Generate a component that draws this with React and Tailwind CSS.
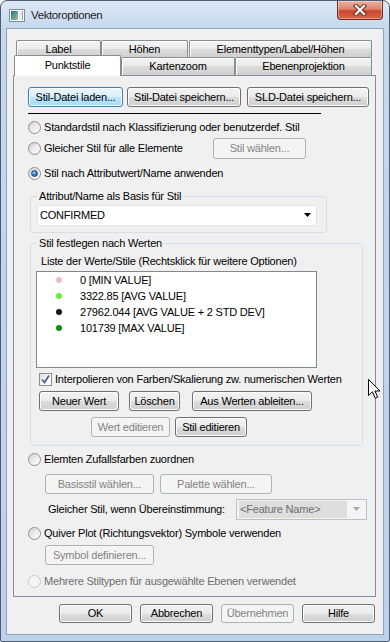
import React from 'react';

const btnStyles = {
  normal:
    'border-[#707070] bg-[linear-gradient(to_bottom,#f2f2f2_0%,#ebebeb_50%,#dddddd_50%,#cfcfcf_100%)] shadow-[inset_0_0_0_1px_#fcfcfc] text-black',
  focus:
    'border-[#3c7fb1] bg-[linear-gradient(to_bottom,#eaf6fd_0%,#d9f0fc_50%,#bee6fd_50%,#a7d9f5_100%)] shadow-[inset_0_0_0_1px_#fcfcfc] text-black',
  disabled: 'border-[#adb2b5] bg-[#f4f4f4] text-[#838383]',
};

const Btn = ({ className = '', variant = 'normal', children }) => (
  <div
    className={`flex shrink-0 items-center justify-center rounded-[3px] border ${btnStyles[variant]} ${className}`}
  >
    {children}
  </div>
);

const Radio = ({ checked, disabled }) => (
  <span
    className={`flex h-[13px] w-[13px] shrink-0 items-center justify-center rounded-full border ${
      disabled
        ? 'border-[#c8c8c8] bg-[#f4f4f4]'
        : 'border-[#8e8f8f] bg-[linear-gradient(135deg,#cfcfcf_0%,#ececec_50%,#ffffff_100%)]'
    }`}
  >
    {checked && (
      <span className="h-[7px] w-[7px] rounded-full border border-[#1b4a78] bg-[radial-gradient(circle_at_40%_35%,#a9d6f4_0%,#3a86c6_45%,#0e3c6a_100%)]" />
    )}
  </span>
);

const RadioRow = ({ checked, disabled, className = '', children }) => (
  <div className={`flex h-[16px] items-center gap-[3px] ml-[14px] ${className}`}>
    <Radio checked={checked} disabled={disabled} />
    <span className={disabled ? 'text-[#6d6d6d]' : 'text-black'}>{children}</span>
  </div>
);

const values = [
  { dot: 'bg-[#f5b8c2]', label: '0 [MIN VALUE]' },
  { dot: 'bg-[#66ee33]', label: '3322.85 [AVG VALUE]' },
  { dot: 'bg-[#161616]', label: '27962.044 [AVG VALUE + 2 STD DEV]' },
  { dot: 'bg-[#138a13]', label: '101739 [MAX VALUE]' },
];

const tabBase =
  'flex items-center justify-center border border-b-0 border-[#898c95] bg-[linear-gradient(to_bottom,#f3f3f3_0%,#ebebeb_50%,#dddddd_50%,#cfcfcf_100%)] shadow-[inset_1px_1px_0_#ffffff] rounded-t-[2px]';

export default function App() {
  return (
    <div className="relative flex h-[642px] w-[390px] flex-col overflow-hidden rounded-t-[7px] rounded-b-[2px] border border-[#4d5d70] bg-[linear-gradient(to_bottom,#dce8f6_0px,#c6d8ee_28px,#bcd1ea_100%)] font-['Liberation_Sans',Arial,sans-serif] text-[11px] leading-[13px] tracking-[-0.2px] text-black">
      {/* Title bar */}
      <div className="flex h-[27px] items-center pt-[2px]">
        <svg className="ml-[8px] shrink-0" width="16" height="13" viewBox="0 0 16 13">
          <defs>
            <linearGradient id="ico" x1="0" y1="0" x2="1" y2="1">
              <stop offset="0" stopColor="#2c6a6e" />
              <stop offset="0.5" stopColor="#5f9c8e" />
              <stop offset="1" stopColor="#9cc4a8" />
            </linearGradient>
          </defs>
          <rect x="0.5" y="0.5" width="15" height="12" fill="#ffffff" stroke="#7d8a99" />
          <rect x="2" y="2" width="7" height="9" fill="url(#ico)" />
          <rect x="10" y="2" width="3" height="9" fill="#e8ecf0" />
          <rect x="13" y="2" width="1" height="9" fill="#8ea0b4" />
        </svg>
        <span className="ml-[6px] text-[11.5px] tracking-[-0.4px] text-[#1e1e1e]">Vektoroptionen</span>
        <div className="ml-auto mr-[6px] flex h-[19px] w-[46px] items-center justify-center self-start -mt-[2px] rounded-b-[4px] border border-t-0 border-[#6e2c1e] bg-[linear-gradient(to_bottom,#eab2a2_0%,#dc8469_45%,#c9472a_55%,#d9664a_100%)] shadow-[inset_0_0_0_1px_rgba(255,255,255,0.35)]">
          <svg width="14" height="12" viewBox="0 0 14 12">
            <path d="M3 2 L11 10 M11 2 L3 10" stroke="#5a1d12" strokeWidth="4.2" strokeLinecap="square" />
            <path d="M3 2 L11 10 M11 2 L3 10" stroke="#ffffff" strokeWidth="2.4" strokeLinecap="square" />
          </svg>
        </div>
      </div>

      {/* Client area */}
      <div className="mx-[5px] flex h-[607px] flex-col border border-[#8ea2bc] bg-[#f0f0f0]">
        {/* Tabs */}
        <div className="mt-[11px] ml-[9px] flex h-[17px]">
          <div className={`${tabBase} h-[17px] w-[85px]`}>Label</div>
          <div className={`${tabBase} h-[17px] w-[87px]`}>Höhen</div>
          <div className={`${tabBase} ml-[1px] h-[17px] w-[183px]`}>Elementtypen/Label/Höhen</div>
        </div>
        <div className="ml-[7px] flex h-[18px] items-end">
          <div className="relative z-10 -mb-[1px] flex h-[21px] w-[107px] items-start justify-center rounded-t-[2px] border border-b-0 border-[#898c95] bg-white pt-[3px]">
            Punktstile
          </div>
          <div className={`${tabBase} h-[18px] w-[114px]`}>Kartenzoom</div>
          <div className={`${tabBase} h-[18px] w-[137px]`}>Ebenenprojektion</div>
        </div>

        {/* Tab panel */}
        <div className="ml-[6px] flex h-[522px] w-[363px] flex-col border border-[#898c95] bg-[#f0f0f0]">
          <div className="ml-[14px] mt-[11px] flex h-[20px]">
            <Btn variant="focus" className="h-[20px] w-[95px]">Stil-Datei laden...</Btn>
            <Btn className="ml-[4px] h-[20px] w-[114px]">Stil-Datei speichern...</Btn>
            <Btn className="ml-[6px] h-[20px] w-[122px]">SLD-Datei speichern...</Btn>
          </div>
          <div className="ml-[14px] mt-[6px] h-px w-[293px] bg-black" />

          <RadioRow className="mt-[5px]">Standardstil nach Klassifizierung oder benutzerdef. Stil</RadioRow>

          <div className="mt-[3px] flex h-[21px] items-center">
            <div className="flex w-[199px] items-center gap-[3px] pl-[14px]">
              <Radio />
              <span>Gleicher Stil für alle Elemente</span>
            </div>
            <Btn variant="disabled" className="h-[21px] w-[93px]">Stil wählen...</Btn>
          </div>

          <RadioRow checked className="mt-[6px]">Stil nach Attributwert/Name anwenden</RadioRow>

          {/* Group: Attribut */}
          <fieldset className="ml-[16px] mt-[9px] w-[297px] rounded-[3px] border border-[#d5dfe5] px-[6px] pb-[6px]">
            <legend className="px-[2px] leading-[13px]">Attribut/Name als Basis für Stil</legend>
            <div className="mt-[2px] flex h-[21px] w-[280px] items-center border border-[#e2e6ea] bg-white pl-[2px] pr-[4px]">
              <span>CONFIRMED</span>
              <svg className="ml-auto" width="8" height="5" viewBox="0 0 8 5">
                <path d="M0 0 H7 L3.5 4 Z" fill="#000000" />
              </svg>
            </div>
          </fieldset>

          {/* Group: Stil festlegen */}
          <fieldset className="ml-[16px] mt-[4px] w-[333px] rounded-[3px] border border-[#d5dfe5] pl-[5px] pb-[8px]">
            <legend className="px-[3px] leading-[13px]">Stil festlegen nach Werten</legend>
            <div className="ml-[5px] mt-[5px] h-[13px]">Liste der Werte/Stile (Rechtsklick für weitere Optionen)</div>
            <div className="mt-[3px] h-[97px] w-[281px] border border-[#828790] bg-white">
              {values.map((v) => (
                <div key={v.label} className="flex h-[16px] items-center">
                  <span className={`ml-[19px] h-[6px] w-[6px] rounded-full ${v.dot}`} />
                  <span className="ml-[18px]">{v.label}</span>
                </div>
              ))}
            </div>
            <div className="ml-[3px] mt-[5px] flex h-[13px] items-center gap-[3px]">
              <span className="flex h-[13px] w-[13px] items-center justify-center border border-[#8e8f8f] bg-[linear-gradient(135deg,#dcdcdc_0%,#f4f4f4_50%,#ffffff_100%)]">
                <svg width="11" height="11" viewBox="0 0 11 11">
                  <path d="M2 5.5 L4.5 8.5 L9 1.5" fill="none" stroke="#4a6394" strokeWidth="1.8" />
                </svg>
              </span>
              <span>Interpolieren von Farben/Skalierung zw. numerischen Werten</span>
            </div>
            <div className="ml-[3px] mt-[5px] flex h-[20px]">
              <Btn className="h-[20px] w-[80px]">Neuer Wert</Btn>
              <Btn className="ml-[10px] h-[20px] w-[51px]">Löschen</Btn>
              <Btn className="ml-[12px] h-[20px] w-[120px]">Aus Werten ableiten...</Btn>
            </div>
            <div className="ml-[55px] mt-[6px] flex h-[20px]">
              <Btn variant="disabled" className="h-[20px] w-[79px]">Wert editieren</Btn>
              <Btn className="ml-[5px] h-[20px] w-[72px]">Stil editieren</Btn>
            </div>
          </fieldset>

          <RadioRow className="mt-[5px]">Elemten Zufallsfarben zuordnen</RadioRow>
          <div className="ml-[31px] mt-[7px] flex h-[20px]">
            <Btn variant="disabled" className="h-[20px] w-[109px]">Basisstil wählen...</Btn>
            <Btn variant="disabled" className="ml-[6px] h-[20px] w-[112px]">Palette wählen...</Btn>
          </div>
          <div className="mt-[5px] flex h-[21px] items-center">
            <span className="ml-[34px] w-[188px]">Gleicher Stil, wenn Übereinstimmung:</span>
            <div className="flex h-[21px] w-[131px] items-center border border-[#bcc0c4] bg-[#f4f4f4] pl-[2px] pr-[5px]">
              <span className="flex h-[17px] w-[108px] items-center bg-[#dedede] pl-[1px] text-[#6d6d6d]">&lt;Feature Name&gt;</span>
              <svg className="ml-auto" width="8" height="5" viewBox="0 0 8 5">
                <path d="M0 0 H7 L3.5 4 Z" fill="#a8a8a8" />
              </svg>
            </div>
          </div>
          <RadioRow className="mt-[5px]">Quiver Plot (Richtungsvektor) Symbole verwenden</RadioRow>
          <div className="ml-[31px] mt-[4px] flex h-[20px]">
            <Btn variant="disabled" className="h-[20px] w-[109px]">Symbol definieren...</Btn>
          </div>
          <RadioRow disabled className="mt-[8px]">Mehrere Stiltypen für ausgewählte Ebenen verwendet</RadioRow>
        </div>

        {/* Dialog buttons */}
        <div className="ml-[52px] mt-[7px] flex h-[19px] gap-[8px]">
          <Btn className="h-[19px] w-[73px]">OK</Btn>
          <Btn className="h-[19px] w-[73px]">Abbrechen</Btn>
          <Btn variant="disabled" className="h-[19px] w-[73px]">Übernehmen</Btn>
          <Btn className="h-[19px] w-[73px]">Hilfe</Btn>
        </div>
      </div>

      {/* Mouse pointer */}
      <svg className="absolute left-[367px] top-[378px]" width="13" height="21" viewBox="0 0 13 21">
        <path d="M0.5 0.5 L0.5 16.5 L4.5 12.8 L7.2 19.2 L9.6 18.2 L7 12 L12 12 Z" fill="#ffffff" stroke="#000000" strokeWidth="1" strokeLinejoin="miter" />
      </svg>
    </div>
  );
}
